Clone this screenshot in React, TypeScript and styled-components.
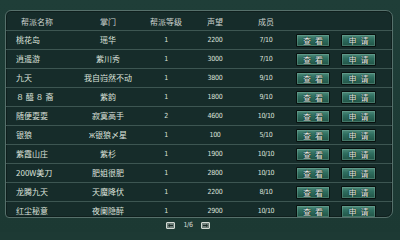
import React from 'react';
import styled, {createGlobalStyle} from 'styled-components';

const GlobalStyle = createGlobalStyle`
  html, body {
    margin: 0;
    padding: 0;
    background: #1d3a34;
  }
  body {
    width: 400px;
    height: 232px;
    overflow: hidden;
    font-family: "Noto Sans CJK SC", "Liberation Sans", sans-serif;
  }
`;

const Screen = styled.div`
  width: 400px;
  height: 232px;
  box-sizing: border-box;
  padding: 10px 7px 0 5px;
  background: linear-gradient(180deg, #1f3e38 0%, #1c3933 100%);
  display: flex;
  flex-direction: column;
`;

const Panel = styled.div`
  height: 208px;
  box-sizing: border-box;
  border: 1px solid #56706b;
  border-radius: 6px 7px 7px 4px;
  background: #162c2a;
  box-shadow: inset 0 0 0 1px #0f1f1d;
  overflow: hidden;
`;

const columns = '72px 60px 56px 42px 60px 45px 45px';

const HeaderRow = styled.div`
  display: grid;
  grid-template-columns: ${columns};
  height: 19px;
  box-sizing: border-box;
  padding-top: 3px;
  align-items: center;
`;

const Row = styled.div`
  display: grid;
  grid-template-columns: ${columns};
  height: 19px;
  box-sizing: border-box;
  border-top: 1px solid #3d5652;
  align-items: center;
`;

const Cell = styled.div<{align?: 'left' | 'center'; pad?: number}>`
  font-size: 8px;
  line-height: 10px;
  color: #dde2dc;
  white-space: nowrap;
  text-align: ${(p) => p.align || 'center'};
  padding-left: ${(p) => p.pad || 0}px;
`;

const HeadCell = styled(Cell)`
  color: #cdd4cf;
`;

const Num = styled(Cell)`
  font-family: "DejaVu Sans Condensed", "Liberation Sans Narrow", "Liberation Sans", sans-serif;
  font-size: 7px;
  letter-spacing: -0.3px;
`;

const BtnCell = styled.div`
  display: flex;
  justify-content: flex-start;
  align-items: center;
`;

const Button = styled.button<{w: number}>`
  width: ${(p) => p.w}px;
  height: 13px;
  padding: 0;
  margin: 0;
  border: 1px solid #08110f;
  border-radius: 1px;
  background: linear-gradient(180deg, #4d8a7a 0%, #2f6e5f 40%, #215446 100%);
  box-shadow: inset 0 0 0 1px rgba(150, 195, 178, 0.3);
  color: #e6eee8;
  font-family: "Noto Sans CJK SC", sans-serif;
  font-size: 8px;
  line-height: 11px;
  letter-spacing: 4px;
  text-indent: 4px;
  text-shadow: 0 0 1px #06120f, 0 0 1px #06120f;
  cursor: pointer;
`;

const Pager = styled.div`
  flex: 1;
  display: flex;
  justify-content: center;
  align-items: center;
  gap: 8px;
  padding-right: 22px;
`;

const PageArrow = styled.span`
  width: 9px;
  height: 7px;
  box-sizing: border-box;
  border: 1px solid #d3dad4;
  border-radius: 1px;
  background: #6d7f7a;
  display: flex;
  align-items: center;
  justify-content: center;
`;

const PageText = styled.span`
  font-family: "DejaVu Sans Condensed", "Liberation Sans", sans-serif;
  font-size: 7px;
  color: #d5dbd5;
  letter-spacing: -0.3px;
`;

interface IGang {
  name: string;
  leader: string;
  level: number;
  fame: number;
  members: string;
}

const gangs: IGang[] = [
  {name: '桃花岛', leader: '瑶华', level: 1, fame: 2200, members: '7/10'},
  {name: '逍遥游', leader: '紫川秀', level: 1, fame: 3000, members: '7/10'},
  {name: '九天', leader: '我自岿然不动', level: 1, fame: 3800, members: '9/10'},
  {name: '８ 醯 ８ 裔', leader: '紫韵', level: 1, fame: 1800, members: '9/10'},
  {name: '随便耍耍', leader: '寂寞高手', level: 2, fame: 4600, members: '10/10'},
  {name: '银狼', leader: 'ж银狼〆星', level: 1, fame: 100, members: '5/10'},
  {name: '紫霞山庄', leader: '紫杉', level: 1, fame: 1900, members: '10/10'},
  {name: '200W美刀', leader: '肥姐很肥', level: 1, fame: 2800, members: '10/10'},
  {name: '龙腾九天', leader: '天魔降伏', level: 1, fame: 2200, members: '8/10'},
  {name: '红尘秘意', leader: '夜阑隐醉', level: 1, fame: 2900, members: '10/10'},
];

const Arrow = ({dir}: {dir: 'left' | 'right'}) => (
  <svg width="5" height="3" viewBox="0 0 5 3">
    {dir === 'left' ? (
      <path d="M0 1.5 L2 0 L2 1 L5 1 L5 2 L2 2 L2 3 Z" fill="#1b2a27" />
    ) : (
      <path d="M5 1.5 L3 0 L3 1 L0 1 L0 2 L3 2 L3 3 Z" fill="#1b2a27" />
    )}
  </svg>
);

const App = () => {
  return (
    <Screen>
      <GlobalStyle />
      <Panel>
        <HeaderRow>
          <HeadCell align="left" pad={15}>帮派名称</HeadCell>
          <HeadCell>掌门</HeadCell>
          <HeadCell>帮派等级</HeadCell>
          <HeadCell>声望</HeadCell>
          <HeadCell>成员</HeadCell>
          <span />
          <span />
        </HeaderRow>
        {gangs.map((g) => (
          <Row key={g.name}>
            <Cell align="left" pad={10}>{g.name}</Cell>
            <Cell>{g.leader}</Cell>
            <Num>{g.level}</Num>
            <Num>{g.fame}</Num>
            <Num>{g.members}</Num>
            <BtnCell>
              <Button w={34}>查看</Button>
            </BtnCell>
            <BtnCell>
              <Button w={35}>申请</Button>
            </BtnCell>
          </Row>
        ))}
      </Panel>
      <Pager>
        <PageArrow><Arrow dir="left" /></PageArrow>
        <PageText>1/6</PageText>
        <PageArrow><Arrow dir="right" /></PageArrow>
      </Pager>
    </Screen>
  );
};

export default App;
